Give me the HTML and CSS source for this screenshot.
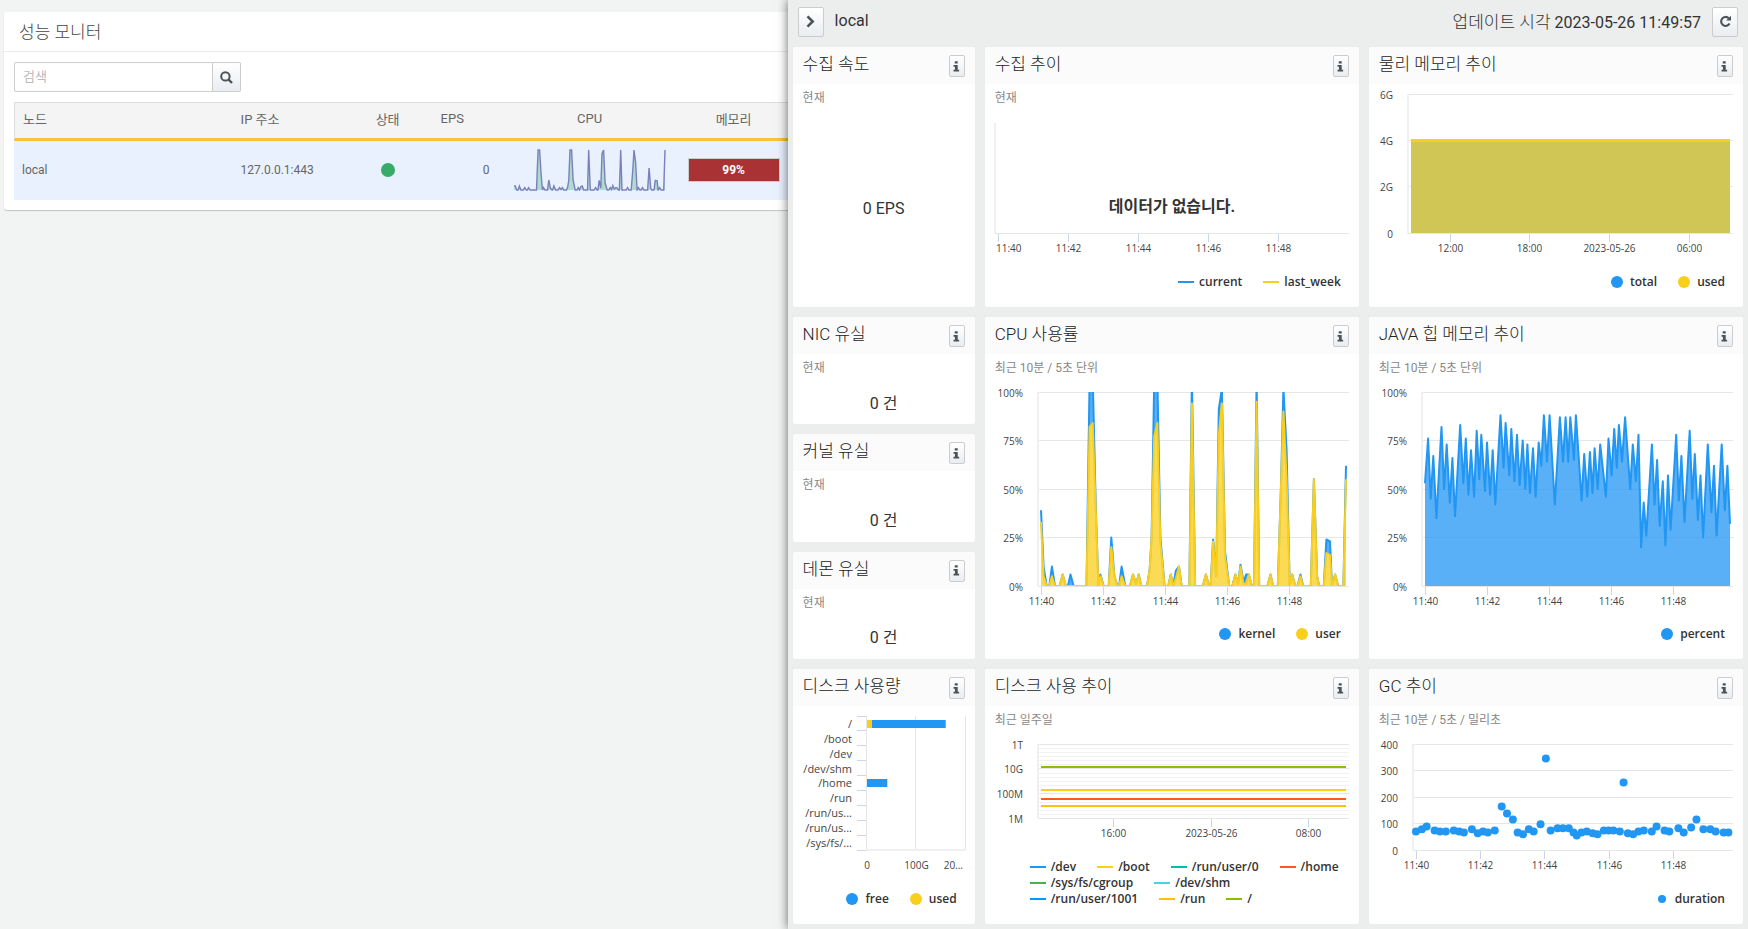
FILE: index.html
```html
<!DOCTYPE html>
<html lang="ko">
<head>
<meta charset="utf-8">
<title>성능 모니터</title>
<link rel="stylesheet" href="styles.css">
</head>
<body>
<svg class="defs" aria-hidden="true">
  <symbol id="i-info" viewBox="0 0 8 12"><path d="M2 0h3.4v2.6H2zM.6 4.2h4.8v5.4H7V11.6H.6V9.6h1.6V6.2H.6z"/></symbol>
</svg>
<div class="app">
  <main class="page">
    <section class="monitor">
      <h1 class="monitor-title">성능 모니터</h1>
      <div class="monitor-body">
        <form class="search">
          <input class="search-input" type="text" placeholder="검색" aria-label="검색">
          <button class="btn search-btn" type="button" aria-label="찾기">
            <svg width="13" height="13" viewBox="0 0 13 13"><circle cx="5.4" cy="5.4" r="4.2" fill="none" stroke="#4c5358" stroke-width="2"/><path d="M8.4 8.4l3.6 3.6" stroke="#4c5358" stroke-width="2.4"/></svg>
          </button>
        </form>
        <table class="nodes">
          <colgroup><col><col class="c-ip"><col class="c-state"><col class="c-eps"><col class="c-cpu"><col class="c-mem"></colgroup>
          <thead>
            <tr><th>노드</th><th>IP 주소</th><th class="mid">상태</th><th>EPS</th><th class="mid">CPU</th><th class="mid">메모리</th></tr>
          </thead>
          <tbody>
            <tr><td>local</td><td>127.0.0.1:443</td><td class="mid"><span class="status"></span></td><td class="num">0</td><td class="mid"><div class="spark" data-chart="spark"></div></td><td class="mid"><div class="mem">99%</div></td></tr>
          </tbody>
        </table>
      </div>
    </section>
  </main>

  <aside class="drawer">
    <header class="drawer-head">
      <button class="btn head-btn" type="button" aria-label="닫기">
        <svg width="9" height="13" viewBox="0 0 9 13"><path d="M1.5 1.3l5.2 5.2-5.2 5.2" fill="none" stroke="#4c5358" stroke-width="2.6"/></svg>
      </button>
      <h2 class="drawer-title">local</h2>
      <p class="updated"><span class="updated-label">업데이트 시각</span> 2023-05-26 11:49:57</p>
      <button class="btn head-btn" type="button" aria-label="새로 고침">
        <svg width="13" height="13" viewBox="0 0 13 13"><path d="M10.6 8.6A4.5 4.5 0 1 1 9.8 3.2" fill="none" stroke="#4c5358" stroke-width="2.1"/><path d="M12 .8v4.8H7.2z" fill="#4c5358"/></svg>
      </button>
    </header>
    <div class="board">
      <article class="card">
        <header class="card-head"><h3>수집 속도</h3><button class="btn info" type="button" aria-label="정보"><svg><use href="#i-info"/></svg></button></header>
        <p class="sub">현재</p>
        <p class="value">0 EPS</p>
      </article>
      <article class="card">
        <header class="card-head"><h3>수집 추이</h3><button class="btn info" type="button" aria-label="정보"><svg><use href="#i-info"/></svg></button></header>
        <p class="sub">현재</p>
        <div class="plot" data-chart="collect"></div>
        <ul class="legend"><li class="line blue">current</li><li class="line yellow">last_week</li></ul>
      </article>
      <article class="card">
        <header class="card-head"><h3>물리 메모리 추이</h3><button class="btn info" type="button" aria-label="정보"><svg><use href="#i-info"/></svg></button></header>
        <div class="plot" data-chart="memory"></div>
        <ul class="legend"><li class="dot blue">total</li><li class="dot yellow">used</li></ul>
      </article>

      <div class="stack">
        <article class="card">
          <header class="card-head"><h3>NIC 유실</h3><button class="btn info" type="button" aria-label="정보"><svg><use href="#i-info"/></svg></button></header>
          <p class="sub">현재</p>
          <p class="value">0 건</p>
        </article>
        <article class="card">
          <header class="card-head"><h3>커널 유실</h3><button class="btn info" type="button" aria-label="정보"><svg><use href="#i-info"/></svg></button></header>
          <p class="sub">현재</p>
          <p class="value">0 건</p>
        </article>
        <article class="card">
          <header class="card-head"><h3>데몬 유실</h3><button class="btn info" type="button" aria-label="정보"><svg><use href="#i-info"/></svg></button></header>
          <p class="sub">현재</p>
          <p class="value">0 건</p>
        </article>
      </div>
      <article class="card">
        <header class="card-head"><h3>CPU 사용률</h3><button class="btn info" type="button" aria-label="정보"><svg><use href="#i-info"/></svg></button></header>
        <p class="sub">최근 10분 / 5초 단위</p>
        <div class="plot" data-chart="cpu"></div>
        <ul class="legend"><li class="dot blue">kernel</li><li class="dot yellow">user</li></ul>
      </article>
      <article class="card">
        <header class="card-head"><h3>JAVA 힙 메모리 추이</h3><button class="btn info" type="button" aria-label="정보"><svg><use href="#i-info"/></svg></button></header>
        <p class="sub">최근 10분 / 5초 단위</p>
        <div class="plot" data-chart="heap"></div>
        <ul class="legend"><li class="dot blue">percent</li></ul>
      </article>

      <article class="card">
        <header class="card-head"><h3>디스크 사용량</h3><button class="btn info" type="button" aria-label="정보"><svg><use href="#i-info"/></svg></button></header>
        <div class="plot" data-chart="disk"></div>
        <ul class="legend"><li class="dot blue">free</li><li class="dot yellow">used</li></ul>
      </article>
      <article class="card">
        <header class="card-head"><h3>디스크 사용 추이</h3><button class="btn info" type="button" aria-label="정보"><svg><use href="#i-info"/></svg></button></header>
        <p class="sub">최근 일주일</p>
        <div class="plot" data-chart="trend"></div>
        <ul class="legend legend-wrap">
          <li class="line blue">/dev</li><li class="line yellow">/boot</li><li class="line teal">/run/user/0</li><li class="line orange">/home</li>
          <li class="line green">/sys/fs/cgroup</li><li class="line cyan">/dev/shm</li>
          <li class="line azure">/run/user/1001</li><li class="line amber">/run</li><li class="line lime">/</li>
        </ul>
      </article>
      <article class="card">
        <header class="card-head"><h3>GC 추이</h3><button class="btn info" type="button" aria-label="정보"><svg><use href="#i-info"/></svg></button></header>
        <p class="sub">최근 10분 / 5초 / 밀리초</p>
        <div class="plot" data-chart="gc"></div>
        <ul class="legend"><li class="dot small blue">duration</li></ul>
      </article>
    </div>
  </aside>
</div>
<script src="charts.js"></script>
</body>
</html>
```
FILE: styles.css
```css
* { box-sizing: border-box; }
body {
  margin: 0;
  background: #f2f4f4;
  color: #333;
  font-family: Roboto, "Noto Sans CJK KR", sans-serif;
  font-size: 12px;
}
h1, h2, h3, p, ul { margin: 0; padding: 0; font-weight: 400; }
ul { list-style: none; }
.defs { position: absolute; width: 0; height: 0; }
.app { display: flex; min-height: 100vh; overflow: hidden; }

.btn {
  display: flex;
  align-items: center;
  justify-content: center;
  padding: 0;
  border: 1px solid #ccc;
  border-radius: 2px;
  background: linear-gradient(#fff, #e9edf1);
}

/* Node list */
.page { flex: 1; min-width: 0; padding: 12px 0 0 4px; }
.monitor {
  background: #fff;
  border-radius: 3px 0 0 3px;
  box-shadow: 0 1px 1px rgba(0, 0, 0, .2);
}
.monitor-title {
  height: 40px;
  padding-left: 15px;
  border-bottom: 1px solid #eaeaea;
  color: #444;
  font-size: 17px;
  font-weight: 300;
  line-height: 40px;
}
.monitor-body { padding: 10px 0 10px 10px; }
.search { display: flex; width: 227px; height: 30px; margin-bottom: 10px; }
.search-input {
  flex: 1;
  min-width: 0;
  padding: 0 8px 2px;
  border: 1px solid #ccc;
  border-radius: 2px 0 0 2px;
  font: inherit;
  font-size: 13px;
}
.search-input::placeholder { color: #bbb; }
.search-btn { width: 28px; border-left: 0; border-radius: 0 2px 2px 0; }

.nodes {
  width: 100%;
  border-collapse: separate;
  border-spacing: 0;
  table-layout: fixed;
  color: #666;
}
.c-ip { width: 110px; }
.c-state { width: 90px; }
.c-eps { width: 67px; }
.c-cpu { width: 180px; }
.c-mem { width: 108px; }
.nodes th {
  height: 39px;
  padding: 0 8px 4px;
  border-top: 1px solid #ddd;
  border-bottom: 3px solid #fac235;
  background: #f4f4f4;
  font-size: 13px;
  font-weight: 400;
  text-align: left;
}
.nodes th:first-child { border-left: 1px solid #ddd; }
.nodes td { height: 59px; padding: 0 8px 2px; background: #e9f1ff; }
.nodes .mid { text-align: center; }
.nodes .num { padding-right: 10px; text-align: right; }
.status {
  display: inline-block;
  width: 14px;
  height: 14px;
  border-radius: 50%;
  background: #37ab68;
  vertical-align: middle;
}
.spark { width: 152px; height: 42px; margin: 0 auto; }
.mem {
  border: 1px solid #ccc;
  height: 24px;
  background: #a93234;
  color: #fff;
  font-weight: 700;
  line-height: 22px;
}

/* Detail drawer */
.drawer {
  position: relative;
  display: flex;
  flex-direction: column;
  width: calc(55% - 1px);
  background: #eceeed;
  box-shadow: 0 0 10px rgba(0, 0, 0, .6);
}
.drawer-head {
  display: flex;
  align-items: center;
  gap: 11px;
  height: 47px;
  padding: 0 10px 4px;
  font-size: 16px;
}
.head-btn { width: 26px; height: 30px; }
.drawer-title { flex: 1; padding-bottom: 2px; font-size: 16px; }
.updated { padding-bottom: 2px; }
.updated-label { font-size: 17px; font-weight: 300; }
.board {
  flex: 1;
  display: grid;
  grid-template-columns: 182fr 374fr 374fr;
  grid-template-rows: 260fr 342fr 255fr;
  gap: 10px;
  padding: 0 5px 5px;
}
.stack { display: grid; grid-template-rows: repeat(3, 1fr); gap: 10px; min-height: 0; }
.card {
  display: flex;
  flex-direction: column;
  min-width: 0;
  min-height: 0;
  overflow: hidden;
  border-radius: 3px;
  background: #fff;
}
.card-head {
  display: flex;
  flex: none;
  justify-content: space-between;
  height: 37px;
  padding: 0 10px;
  background: #fbfbfb;
}
.card-head h3 { color: #222; font-size: 17px; font-weight: 300; line-height: 35px; white-space: nowrap; }
.info { width: 16px; height: 22px; margin-top: 8px; }
.info svg { width: 7px; height: 11px; fill: #4c5358; }
.sub { flex: none; padding-left: 10px; color: #888; line-height: 28px; }
.value {
  flex: 1;
  display: flex;
  align-items: center;
  justify-content: center;
  padding-bottom: 3px;
  font-size: 16px;
}
.plot { flex: 1; min-height: 0; overflow: hidden; }
.plot svg, .spark svg { display: block; }
.legend {
  display: flex;
  flex: none;
  justify-content: flex-end;
  gap: 0 21px;
  padding: 9px 18px 17px;
  font-family: "Open Sans", sans-serif;
  font-weight: 600;
  font-size: 12px;
  line-height: 16px;
}
.legend-wrap { flex-wrap: wrap; justify-content: flex-start; padding-left: 45px; padding-right: 10px; }
.legend li { display: flex; align-items: center; }
.legend li::before { content: ""; }
.legend .line::before { width: 16px; height: 2px; margin-right: 5px; background: var(--c); }
.legend .dot::before { width: 12px; height: 12px; margin-right: 7px; border-radius: 50%; background: var(--c); }
.legend .small::before { width: 8px; height: 8px; margin-right: 9px; }
.blue { --c: #2196f3; }
.yellow { --c: #facf1c; }
.teal { --c: #00bfa5; }
.orange { --c: #ff5722; }
.green { --c: #4caf50; }
.cyan { --c: #4dd0e1; }
.azure { --c: #0099ff; }
.amber { --c: #fbc010; }
.lime { --c: #8fbc00; }

/* Chart parts */
.axis-text { fill: #444; font-family: "Open Sans", sans-serif; font-size: 10px; }
.disk-text { font-size: 11px; }
.no-data { fill: #333; font-size: 16px; font-weight: 700; }
.grid { stroke: #e6e6e6; }
.minor { stroke: #f2f2f2; }
.edge { stroke: #f0f0f0; stroke-width: 2; }
.tick { stroke: #ccd6eb; }
```
FILE: charts.js
```javascript
const BLUE = '#2196f3', YELLOW = '#facf1c';

// [seconds, total, user]
const cpu = [[0,39,33],[5,10,5],[11,0,0],[16,0,0],[21,10,5],[27,0,0],[36,0,0],[42,6,6],[48,0,0],[52,0,0],[57,6,0],[63,0,0],[88,0,0],[94,106,82],[100,108,84],[106,40,38],[111,0,0],[115,6,5],[121,0,0],[131,0,0],[136,25,20],[142,5,5],[148,0,0],[151,0,0],[156,10,5],[163,0,0],[172,0,0],[178,6,6],[184,1,1],[189,6,6],[194,0,0],[205,0,0],[210,8,8],[214,25,25],[219,106,77],[225,108,84],[231,25,22],[239,0,0],[246,0,0],[251,6,6],[256,0,0],[261,8,4],[267,10,10],[272,0,0],[287,0,0],[292,108,94],[298,0,0],[313,0,0],[319,6,6],[325,0,0],[328,0,0],[333,24,23],[339,5,5],[344,91,78],[350,102,94],[356,18,15],[364,0,0],[370,0,0],[376,6,6],[381,1,1],[386,11,10],[392,2,1],[397,6,1],[402,6,6],[408,0,0],[412,0,0],[417,106,95],[422,0,0],[438,0,0],[444,6,6],[449,0,0],[458,0,0],[464,50,50],[469,102,90],[475,70,55],[481,0,0],[486,6,6],[492,0,0],[496,0,0],[502,6,5],[507,0,0],[522,0,0],[528,55,55],[534,5,5],[538,0,0],[547,0,0],[552,24,17],[559,23,16],[563,0,0],[569,6,6],[575,0,0],[585,0,0],[590,62,55]];
const heap = [[0,53],[6,76],[11,45],[16,67],[22,35],[32,82],[37,50],[42,73],[48,43],[53,66],[58,36],[68,83],[74,53],[79,76],[84,47],[89,70],[95,46],[100,80],[105,55],[109,78],[116,49],[120,74],[126,47],[131,70],[136,42],[146,88],[152,61],[156,84],[163,57],[167,81],[173,54],[178,78],[183,52],[189,75],[194,50],[198,73],[203,48],[209,71],[214,46],[220,74],[225,62],[230,88],[236,64],[241,88],[251,42],[261,87],[267,64],[272,87],[277,64],[281,87],[288,65],[292,88],[303,44],[308,68],[314,46],[319,69],[324,48],[328,71],[334,50],[339,73],[350,46],[355,76],[361,57],[366,81],[371,61],[375,83],[381,64],[387,87],[397,50],[402,73],[408,54],[413,78],[418,20],[423,43],[428,26],[439,73],[444,42],[449,65],[454,31],[460,54],[465,21],[470,57],[475,29],[486,78],[491,44],[496,67],[502,33],[512,80],[517,45],[522,68],[528,34],[533,57],[538,25],[547,73],[554,38],[559,62],[564,26],[574,73],[580,39],[585,62],[590,32]];
const gc = [[0,70],[11,78],[20,89],[35,74],[45,70],[56,70],[71,74],[81,70],[90,66],[105,78],[116,63],[126,70],[135,66],[148,74],[161,164],[171,138],[182,115],[191,66],[201,59],[212,78],[221,70],[234,97],[244,345],[253,74],[266,82],[276,82],[287,82],[296,66],[302,55],[311,66],[321,70],[332,63],[341,59],[353,74],[362,74],[371,74],[383,70],[390,255],[398,63],[408,59],[418,70],[428,74],[443,70],[452,89],[467,74],[476,70],[493,82],[503,66],[517,85],[527,115],[540,78],[553,78],[563,70],[578,66],[587,66]];

const minutes = (span, step) => ['11:40', '11:42', '11:44', '11:46', '11:48'].map((t, i) => [i * step / span, t]);
const line = (x1, y1, x2, y2, cls) => `<line class="${cls}" x1="${x1}" y1="${y1}" x2="${x2}" y2="${y2}"/>`;
const text = (x, y, s, anchor = 'middle', cls = '') => `<text class="axis-text ${cls}" x="${x}" y="${y}" text-anchor="${anchor}">${s}</text>`;
const half = v => Math.floor(v) + 0.5;

// Draws the shared frame and returns scales for the data inside it
function frame(w, h, o) {
  const l = o.left, r = w - 10, t = o.top, b = h - o.bottom, n = o.y.length - 1;
  let s = '';
  o.y.forEach((label, i) => {
    const y = half(b - (b - t) * i / n);
    s += line(l, y, r, y, 'grid') + text(l - 15, y + 4, label, 'end');
    if (o.minor && i < n) o.minor.forEach(m => { const v = half(y - (b - t) / n * m); s += line(l, v, r, v, 'minor'); });
  });
  s += line(l, t, l, b, 'edge');
  const x0 = l + 3, x1 = r - 3;
  o.x.forEach(([f, label], i) => {
    const x = half(x0 + (x1 - x0) * f);
    s += line(x, b + 1, x, b + 9, 'tick');
    s += o.clampFirst && i === 0 ? text(l + 1, b + 19, label, 'start') : text(x, b + 19, label);
  });
  return { s, l, r, t, b, x: f => x0 + (x1 - x0) * f, y: f => b - (b - t) * f };
}

const path = pts => pts.map((p, i) => (i ? 'L' : 'M') + p[0].toFixed(1) + ' ' + p[1].toFixed(1)).join('');
// Fills between the upper points and the lower ones, then strokes the upper edge
function band(upper, lower, color) {
  const d = path(upper);
  return `<path d="${d}${path([...lower].reverse()).replace('M', 'L')}Z" fill="${color}" fill-opacity=".75"/><path d="${d}" fill="none" stroke="${color}" stroke-width="2" stroke-linejoin="round"/>`;
}

const percent = ['0%', '25%', '50%', '75%', '100%'];
const charts = {
  collect(w, h) {
    const f = frame(w, h, { left: 10, top: 11, bottom: 32, y: [], x: minutes(596, 120), clampFirst: true });
    return f.s + line(f.l, half(f.b), f.r, half(f.b), 'grid') + `<text class="no-data" x="${(f.l + f.r) / 2}" y="${f.b - 21}" text-anchor="middle">데이터가 없습니다.</text>`;
  },
  memory(w, h) {
    const f = frame(w, h, { left: 39, top: 10, bottom: 32, y: ['0', '2G', '4G', '6G'], x: [[.124, '12:00'], [.373, '18:00'], [.622, '2023-05-26'], [.872, '06:00']] });
    const y = Math.round(f.y(.667));
    return f.s + `<rect x="${f.x(0)}" y="${y}" width="${f.x(1) - f.x(0)}" height="${f.b - y}" fill="#cfc655"/>`
      + `<path d="M${f.x(0)} ${y - .5}H${f.x(1)}" stroke="#b5d3b4"/><path d="M${f.x(0)} ${y + 1}H${f.x(1)}" stroke="#f4cd25" stroke-width="2"/>`;
  },
  cpu(w, h) {
    const f = frame(w, h, { left: 53, top: 10, bottom: 31, y: percent, x: minutes(590, 120) });
    const pts = k => cpu.map(d => [f.x(d[0] / 590), f.y(d[k] / 100)]);
    const base = [[f.x(0), f.b], [f.x(1), f.b]];
    return f.s + `<clipPath id="cpu-clip"><rect x="${f.l}" y="${f.t}" width="${f.r - f.l}" height="${f.b - f.t}"/></clipPath><g clip-path="url(#cpu-clip)">`
      + band(pts(1), pts(2), BLUE) + band(pts(2), base, YELLOW) + '</g>';
  },
  heap(w, h) {
    const f = frame(w, h, { left: 53, top: 10, bottom: 31, y: percent, x: minutes(590, 120) });
    return f.s + band(heap.map(d => [f.x(d[0] / 590), f.y(d[1] / 100)]), [[f.x(0), f.b], [f.x(1), f.b]], BLUE);
  },
  gc(w, h) {
    const f = frame(w, h, { left: 44, top: 10, bottom: 32, y: ['0', '100', '200', '300', '400'], x: minutes(590, 121) });
    return f.s + gc.map(d => `<circle cx="${f.x(d[0] / 590)}" cy="${f.y(d[1] / 400)}" r="4" fill="${BLUE}"/>`).join('');
  },
  trend(w, h) {
    const f = frame(w, h, { left: 53, top: 10, bottom: 32, y: ['1M', '100M', '10G', '1T'], minor: [.16, .32, .49, .65, .81], x: [[.237, '16:00'], [.558, '2023-05-26'], [.876, '08:00']] });
    const row = (v, c) => `<path d="M${f.x(0)} ${Math.round(f.y(v))}H${f.x(1)}" stroke="${c}" stroke-width="2"/>`;
    return f.s + row(.685, '#8fbc00') + row(.385, YELLOW) + row(.262, '#ff5722') + row(.165, '#fbc010');
  },
  disk(w, h) {
    const l = 73, r = w - 10, t = 10, b = h - 32, step = (b - t) / 9, unit = (r - l) / 2;
    const names = ['/', '/boot', '/dev', '/dev/shm', '/home', '/run', '/run/us...', '/run/us...', '/sys/fs/...'];
    let s = [1, 2].map(i => line(half(l + unit * i), t, half(l + unit * i), b, 'grid')).join('') + line(half(l), t, half(l), b, 'grid') + line(l, b, r, b, 'edge');
    for (let i = 0; i <= 9; i++) s += line(l - 9, half(t + step * i), l, half(t + step * i), 'tick');
    names.forEach((n, i) => { s += text(l - 14, Math.ceil(t + step * (i + .5)) + 4, n, 'end', 'disk-text'); });
    const bar = (i, a, z, c) => `<rect x="${l + 1 + a * unit}" y="${Math.ceil(t + step * (i + .5)) - 4}" width="${(z - a) * unit}" height="8" fill="${c}"/>`;
    s += bar(0, 0, .1, YELLOW) + bar(0, .1, 1.59, BLUE) + bar(4, 0, .41, BLUE);
    return s + text(l + 1, b + 19, '0') + text(l + 1 + unit, b + 19, '100G') + text(r - 2, b + 19, '20...', 'end');
  },
  spark(w, h) {
    const vals = cpu.map((d, i) => [d[0] / 590 * (w - 1), h - 1 - Math.min(i ? (i === cpu.length - 1 ? 100 : d[1]) : 10, 100) * .4]);
    return `<path d="${path(vals)}L${w - 1} ${h - 1}L0 ${h - 1}Z" fill="#aedbd0"/><path d="${path(vals)}" fill="none" stroke="#7b80bc" stroke-width="1.4"/>`;
  }
};

function draw() {
  document.querySelectorAll('[data-chart]').forEach(el => {
    el.innerHTML = '';
    const w = Math.round(el.clientWidth), h = Math.round(el.clientHeight);
    el.innerHTML = `<svg width="${w}" height="${h}">${charts[el.dataset.chart](w, h)}</svg>`;
  });
}
draw();
window.addEventListener('resize', draw);
```
